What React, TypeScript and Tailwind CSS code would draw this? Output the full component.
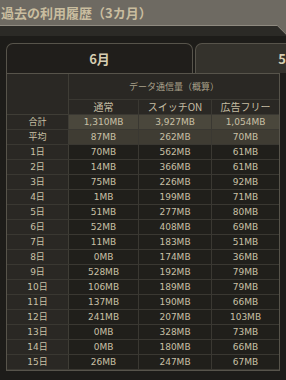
type UsageRow = {
  label: string;
  normal: string;
  switchOn: string;
  adFree: string;
};

const summary: (UsageRow & { bg: string })[] = [
  { label: "合計", normal: "1,310MB", switchOn: "3,927MB", adFree: "1,054MB", bg: "bg-[#4a473c]" },
  { label: "平均", normal: "87MB", switchOn: "262MB", adFree: "70MB", bg: "bg-[#3f3c33]" },
];

const days: UsageRow[] = [
  { label: "1日", normal: "70MB", switchOn: "562MB", adFree: "61MB" },
  { label: "2日", normal: "14MB", switchOn: "366MB", adFree: "61MB" },
  { label: "3日", normal: "75MB", switchOn: "226MB", adFree: "92MB" },
  { label: "4日", normal: "1MB", switchOn: "199MB", adFree: "71MB" },
  { label: "5日", normal: "51MB", switchOn: "277MB", adFree: "80MB" },
  { label: "6日", normal: "52MB", switchOn: "408MB", adFree: "69MB" },
  { label: "7日", normal: "11MB", switchOn: "183MB", adFree: "51MB" },
  { label: "8日", normal: "0MB", switchOn: "174MB", adFree: "36MB" },
  { label: "9日", normal: "528MB", switchOn: "192MB", adFree: "79MB" },
  { label: "10日", normal: "106MB", switchOn: "189MB", adFree: "79MB" },
  { label: "11日", normal: "137MB", switchOn: "190MB", adFree: "66MB" },
  { label: "12日", normal: "241MB", switchOn: "207MB", adFree: "103MB" },
  { label: "13日", normal: "0MB", switchOn: "328MB", adFree: "73MB" },
  { label: "14日", normal: "0MB", switchOn: "180MB", adFree: "66MB" },
  { label: "15日", normal: "26MB", switchOn: "247MB", adFree: "67MB" },
];

const jp = "font-['Noto_Sans_CJK_JP',sans-serif]";
const num = "font-['DejaVu_Sans','Noto_Sans_CJK_JP',sans-serif]";

function DataRow({ row, bg }: { row: UsageRow; bg: string }) {
  return (
    <div className="flex h-[15px] border-b border-[#3a3832] text-[9px] leading-[14px] text-[#c9c0a6]">
      <div className={`w-[62px] border-r border-[#3f3d36] bg-[#2a2824] text-center ${num}`}>
        {row.label}
      </div>
      <div className={`w-[70px] border-r border-[#3a3832] text-center ${bg} ${num}`}>
        {row.normal}
      </div>
      <div className={`w-[73px] border-r border-[#3a3832] text-center ${bg} ${num}`}>
        {row.switchOn}
      </div>
      <div className={`w-[67px] text-center ${bg} ${num}`}>{row.adFree}</div>
    </div>
  );
}

export default function App() {
  return (
    <div className="h-[380px] w-[286px] overflow-hidden bg-[#6e6a62]">
      <div className={`flex h-[25px] items-center pl-[1px] text-[13px] font-bold text-[#c9bd9f] ${jp}`}>
        過去の利用履歴（3カ月）
      </div>

      <div className="bg-[#8f8a80] pt-px [clip-path:polygon(0_0,277px_0,286px_9px,286px_100%,0_100%)]">
        <div className="h-[400px] bg-[#1d1c19] [clip-path:polygon(0_0,277px_0,286px_9px,286px_100%,0_100%)]">
          <div className="h-[10px] bg-[#2b2a26]" />
          <div className="h-[7px]" />

          <div className="flex h-[30px] overflow-hidden pl-[6px]">
            <div className={`flex w-[187px] shrink-0 items-center justify-center rounded-t-[7px] border border-b-0 border-[#57544b] bg-[#201e1b] text-[13px] font-bold text-[#d6cdb2] ${jp}`}>
              6月
            </div>
            <div className={`ml-[2px] flex w-[187px] shrink-0 items-center justify-center rounded-t-[7px] border border-b-0 border-[#57544b] bg-[#34322c] text-[13px] font-bold text-[#d6cdb2] ${jp}`}>
              5月
            </div>
          </div>

          <div className="ml-[6px] w-[274px] border border-[#57544b]">
            <div className="flex">
              <div className="h-[41px] w-[62px] border-r border-b border-[#3f3d36] bg-[#2a2824]" />
              <div className="w-[210px]">
                <div className={`flex h-[26px] items-center justify-center border-b border-[#3a3832] bg-[#2a2824] text-[9px] text-[#a9a18b] ${jp}`}>
                  データ通信量（概算）
                </div>
                <div className={`flex h-[15px] border-b border-[#3a3832] bg-[#2a2824] text-[10px] leading-[14px] text-[#c6bda3] ${jp}`}>
                  <div className="w-[70px] border-r border-[#3a3832] text-center">通常</div>
                  <div className="w-[73px] border-r border-[#3a3832] text-center">スイッチON</div>
                  <div className="w-[67px] text-center">広告フリー</div>
                </div>
              </div>
            </div>

            {summary.map((row) => (
              <DataRow key={row.label} row={row} bg={row.bg} />
            ))}
            {days.map((row) => (
              <DataRow key={row.label} row={row} bg="bg-[#201f1b]" />
            ))}
          </div>
        </div>
      </div>
    </div>
  );
}
